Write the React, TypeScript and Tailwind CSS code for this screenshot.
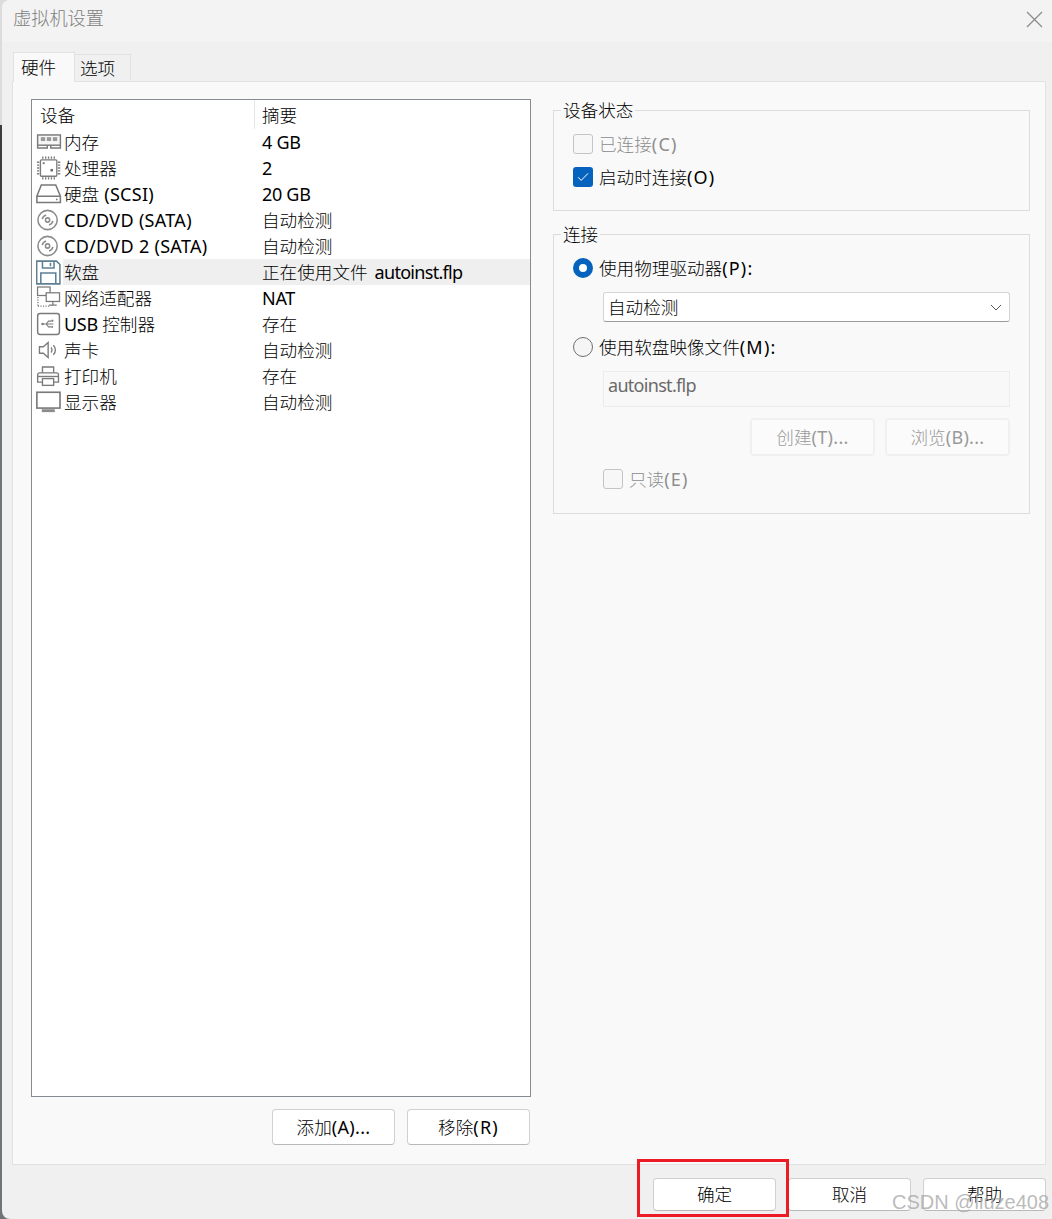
import { FC, ReactNode } from "react";

const FONT = "font-['Noto_Sans','Noto_Sans_CJK_SC',sans-serif]";

//Latin runs need small spacing fixes to sit at the reference's widths
const latinClass = (part: string) => {
  if (/[a-z]{2}/.test(part)) return "tracking-[-0.7px] [word-spacing:3px]";
  if (/^\(.\):?$/.test(part)) return "tracking-[1.2px]";
  if (/^[\dA-Z ]+$/.test(part)) return "tracking-[-0.3px]";
  return "tracking-[0.3px]";
};

//Chinese runs render thin and grey in the reference, latin runs black
const Txt: FC<{ children: string }> = ({ children }) => (
  <>
    {children.split(/([\u4e00-\u9fff]+)/).map((part, i) =>
      i % 2 === 1 ? (
        <span key={i} className="text-[17.6px] font-light">
          {part}
        </span>
      ) : (
        <span key={i} className={latinClass(part)}>
          {part}
        </span>
      ),
    )}
  </>
);

//Hardware icons, all drawn on a 28x26 box
const MemoryIcon = () => (
  <svg width="28" height="26" viewBox="0 0 28 26" fill="none" stroke="#7a7a7a" strokeWidth="1.5">
    <rect x="1.7" y="5.7" width="23.6" height="10.6" fill="#f6f6f6" />
    <rect x="5" y="8" width="4.5" height="4" fill="#999" stroke="none" />
    <rect x="11.2" y="8" width="4.5" height="4" fill="#999" stroke="none" />
    <rect x="17.5" y="8" width="4.5" height="4" fill="#999" stroke="none" />
    <path d="M1.7 16.3v3h10v-3M25.3 16.3v3h-10v-3" />
  </svg>
);

const CpuIcon = () => (
  <svg width="28" height="26" viewBox="0 0 28 26" fill="none" stroke="#7a7a7a" strokeWidth="1.4">
    <rect x="4.6" y="4.6" width="17" height="17" rx="1" />
    <path d="M7 1v2.4M10 1v2.4M13 1v2.4M16 1v2.4M19 1v2.4M7 22.6V25M10 22.6V25M13 22.6V25M16 22.6V25M19 22.6V25M1 7h2.4M1 10h2.4M1 13h2.4M1 16h2.4M1 19h2.4M22.8 7h2.4M22.8 10h2.4M22.8 13h2.4M22.8 16h2.4M22.8 19h2.4" />
    <rect x="7" y="7" width="2" height="2" fill="#7a7a7a" stroke="none" />
    <rect x="15" y="14" width="2.6" height="2.6" fill="#6a6a6a" stroke="none" />
  </svg>
);

const DiskIcon = () => (
  <svg width="28" height="26" viewBox="0 0 28 26" fill="none" stroke="#7a7a7a" strokeWidth="1.6">
    <path d="M5.5 3.7h15l4.8 11.6v6.5H.9v-6.5z" />
    <path d="M.9 15.3h24.4" />
    <circle cx="21.5" cy="18.6" r="0.9" fill="#7a7a7a" stroke="none" />
  </svg>
);

const CdIcon = () => (
  <svg width="28" height="26" viewBox="0 0 28 26" fill="none" stroke="#8c8c8c" strokeWidth="1.6">
    <circle cx="12" cy="13" r="10" />
    <circle cx="12" cy="13" r="2.2" />
    <path d="M6.5 12a5.6 5.6 0 0 1 4-4.3M17.5 14a5.6 5.6 0 0 1-4 4.3" />
  </svg>
);

const FloppyIcon = () => (
  <svg width="28" height="26" viewBox="0 0 28 26" fill="none" stroke="#5f8094" strokeWidth="1.6">
    <path d="M.7 1.7h20.5l3.6 3.6v20H.7z" />
    <path d="M6.7 1.7v7.2h12V1.7M15 3.5v3.5M5 25.3V14h15.5v11.3" />
  </svg>
);

const NetworkIcon = () => (
  <svg width="28" height="26" viewBox="0 0 28 26" fill="none" stroke="#7a7a7a" strokeWidth="1.3">
    <rect x="1.6" y="1.6" width="13" height="8.8" />
    <rect x="10.6" y="7.6" width="13.8" height="9" fill="#fff" />
    <path d="M17.5 16.6v3.4M13.5 20.4h8" />
    <path d="M2 12v9.5M2 21.5h12" strokeDasharray="1.2 1.4" />
  </svg>
);

const UsbIcon = () => (
  <svg width="28" height="26" viewBox="0 0 28 26" fill="none" stroke="#7a7a7a" strokeWidth="1.5">
    <rect x="1.7" y="2.2" width="22.6" height="21.6" rx="2.5" />
    <path d="M7 13h11M10.5 13l2.5-3h3M10.5 13l2.5 3h3" strokeWidth="1.1" />
    <rect x="16" y="8.6" width="2" height="2" fill="#7a7a7a" stroke="none" />
    <circle cx="16.8" cy="16" r="1" fill="#7a7a7a" stroke="none" />
    <circle cx="6.8" cy="13" r="1.3" fill="#7a7a7a" stroke="none" />
  </svg>
);

const SoundIcon = () => (
  <svg width="28" height="26" viewBox="0 0 28 26" fill="none" stroke="#7a7a7a" strokeWidth="1.4">
    <path d="M3.6 9.6h4l5-4.4v15.6l-5-4.4h-4z" />
    <path d="M15.5 10.5a3.5 3.5 0 0 1 0 5M18 8a7 7 0 0 1 0 10" />
  </svg>
);

const PrinterIcon = () => (
  <svg width="28" height="26" viewBox="0 0 28 26" fill="none" stroke="#7a7a7a" strokeWidth="1.4">
    <path d="M6.7 9.7V3.7h11.6v6" />
    <path d="M6.7 19.3H1.7V11.7a2 2 0 0 1 2-2h17.6a2 2 0 0 1 2 2v7.6h-5" />
    <rect x="6.7" y="15.7" width="11.6" height="7" />
    <path d="M1.7 13.5h21.6" />
  </svg>
);

const DisplayIcon = () => (
  <svg width="28" height="26" viewBox="0 0 28 26" fill="none">
    <rect x="0.9" y="2.9" width="24" height="16.4" stroke="#7a7a7a" strokeWidth="1.7" />
    <rect x="6" y="20.5" width="13.5" height="3" fill="#8c8c8c" />
  </svg>
);

const devices = [
  { icon: <MemoryIcon />, name: "内存", summary: "4 GB" },
  { icon: <CpuIcon />, name: "处理器", summary: "2" },
  { icon: <DiskIcon />, name: "硬盘 (SCSI)", summary: "20 GB" },
  { icon: <CdIcon />, name: "CD/DVD (SATA)", summary: "自动检测" },
  { icon: <CdIcon />, name: "CD/DVD 2 (SATA)", summary: "自动检测" },
  { icon: <FloppyIcon />, name: "软盘", summary: "正在使用文件 autoinst.flp", selected: true },
  { icon: <NetworkIcon />, name: "网络适配器", summary: "NAT" },
  { icon: <UsbIcon />, name: "USB 控制器", summary: "存在" },
  { icon: <SoundIcon />, name: "声卡", summary: "自动检测" },
  { icon: <PrinterIcon />, name: "打印机", summary: "存在" },
  { icon: <DisplayIcon />, name: "显示器", summary: "自动检测" },
];

const Group: FC<{ title: string; className: string; children: ReactNode }> = ({ title, className, children }) => (
  <div className={`relative border border-[#dcdcdc] pl-[19px] pr-[19px] pt-[23px] ${className}`}>
    <span className="absolute left-[7px] top-[-13px] bg-[#f9f9f9] px-[2px] leading-[24px]">
      <Txt>{title}</Txt>
    </span>
    {children}
  </div>
);

const Check: FC<{ label: string; checked?: boolean; disabled?: boolean; className?: string }> = ({
  label,
  checked,
  disabled,
  className,
}) => (
  <div className={`flex h-[20px] items-center gap-[6px] ${disabled ? "text-[#8d8d8d]" : "text-black"} ${className ?? ""}`}>
    {checked ? (
      <span className="flex size-[20px] items-center justify-center rounded-[3px] bg-[#0563bd]">
        <svg width="12" height="10" viewBox="0 0 12 10" fill="none" stroke="#fff" strokeWidth="1">
          <path d="M1 5.2 4.2 8.4 11 1.4" />
        </svg>
      </span>
    ) : (
      <span className="size-[20px] rounded-[3px] border border-[#c4c4c4] bg-[#f7f7f7]" />
    )}
    <span>
      <Txt>{label}</Txt>
    </span>
  </div>
);

const Radio: FC<{ label: string; checked?: boolean; className?: string }> = ({ label, checked, className }) => (
  <div className={`flex h-[20px] items-center gap-[6px] ${className ?? ""}`}>
    {checked ? (
      <span className="size-[20px] rounded-full border-[6px] border-[#0563bd] bg-white" />
    ) : (
      <span className="size-[20px] rounded-full border border-[#6f6f6f] bg-[#f5f5f5]" />
    )}
    <span>
      <Txt>{label}</Txt>
    </span>
  </div>
);

const Button: FC<{ label: string; className?: string }> = ({ label, className }) => (
  <button className={`rounded-[4px] border border-[#d0d0d0] border-b-[#b9b9b9] bg-white ${className ?? ""}`}>
    <Txt>{label}</Txt>
  </button>
);

const DisabledButton: FC<{ label: string }> = ({ label }) => (
  <button className="h-[38px] w-[125px] rounded-[4px] border-[2px] border-[#f0f0f0] bg-[#fbfbfb] text-[#9a9a9a]">
    <Txt>{label}</Txt>
  </button>
);

const App: FC = () => {
  return (
    <div
      className={`relative flex h-[1219px] w-[1052px] overflow-hidden bg-[linear-gradient(#dcdcdc_0,#dcdcdc_125px,#3c3c3c_125px,#3c3c3c_240px,#6f7478_240px)] text-[18px] text-black ${FONT}`}
    >
      <div className="ml-[2px] flex flex-1 flex-col overflow-hidden rounded-l-[8px] bg-[#f0f0f0]">
        {/* Title bar */}
        <div className="flex h-[42px] items-center justify-between bg-[#f3f3f3] pb-[4px] pl-[11px] pr-[9px] text-[18.2px] font-light text-[#808080]">
          <span>虚拟机设置</span>
          <svg width="17" height="17" viewBox="0 0 17 17" fill="none" stroke="#8c8c8c" strokeWidth="1.3">
            <path d="M1 1l15 15M16 1 1 16" />
          </svg>
        </div>

        {/* Tabs */}
        <div className="flex items-end pl-[11px] pt-[10px]">
          <div className="z-10 mb-[-1px] flex h-[30px] w-[62px] items-center border border-b-0 border-[#e2e2e2] bg-[#f9f9f9] pl-[7px]">
            <Txt>硬件</Txt>
          </div>
          <div className="flex h-[27px] w-[56px] items-center border border-b-0 border-l-0 border-[#e2e2e2] bg-[#f0f0f0] pl-[5px]">
            <Txt>选项</Txt>
          </div>
        </div>

        {/* Panel */}
        <div className="ml-[10px] mr-[6px] flex h-[1084px] border border-[#e2e2e2] bg-[#f9f9f9] pl-[18px] pt-[17px]">
          <div className="w-[500px]">
            <div className="h-[998px] border border-[#878c92] bg-white">
              <div className="flex h-[29px] items-center">
                <span className="w-[222px] pl-[8px] pt-[1px]">
                  <Txt>设备</Txt>
                </span>
                <span className="h-full border-l border-[#e5e5e5] pl-[7px] leading-[31px]">
                  <Txt>摘要</Txt>
                </span>
              </div>
              {devices.map((d) => (
                <div key={d.name} className="flex h-[26px] items-center">
                  <span className="ml-[4px] flex h-[26px] w-[27px] shrink-0 items-center overflow-hidden">{d.icon}</span>
                  <span className={`flex h-full w-[192px] items-center whitespace-pre ${d.selected ? "bg-[#efefef]" : ""}`}>
                    <span className="pl-[1px]">
                      <Txt>{d.name}</Txt>
                    </span>
                  </span>
                  <span className={`flex h-full flex-1 items-center whitespace-pre pl-[7px] ${d.selected ? "bg-[#efefef]" : ""}`}>
                    <span>
                      <Txt>{d.summary}</Txt>
                    </span>
                  </span>
                </div>
              ))}
            </div>
            <div className="mt-[12px] flex justify-end gap-[12px] pr-[1px]">
              <Button label="添加(A)..." className="h-[36px] w-[123px]" />
              <Button label="移除(R)" className="h-[36px] w-[123px]" />
            </div>
          </div>

          <div className="ml-[22px] flex w-[477px] flex-col pt-[11px]">
            <Group title="设备状态" className="h-[101px]">
              <Check label="已连接(C)" disabled />
              <Check label="启动时连接(O)" checked className="mt-[13px]" />
            </Group>
            <Group title="连接" className="mt-[23px] h-[280px]">
              <Radio label="使用物理驱动器(P):" checked />
              <div className="ml-[30px] mt-[14px] flex h-[30px] items-center justify-between rounded-[3px] border border-[#d5d5d5] border-b-[#9c9c9c] bg-white pl-[4px] pr-[7px]">
                <span>
                  <Txt>自动检测</Txt>
                </span>
                <svg width="12" height="7" viewBox="0 0 12 7" fill="none" stroke="#555" strokeWidth="1">
                  <path d="M1 1l5 5 5-5" />
                </svg>
              </div>
              <Radio label="使用软盘映像文件(M):" className="mt-[15px]" />
              <div className="ml-[30px] mt-[14px] h-[36px] border border-[#ececec] bg-[#f8f8f8] pl-[4px] leading-[27px] text-[#6a6a6a]">
                <Txt>autoinst.flp</Txt>
              </div>
              <div className="mt-[11px] flex justify-end gap-[10px]">
                <DisabledButton label="创建(T)..." />
                <DisabledButton label="浏览(B)..." />
              </div>
              <Check label="只读(E)" disabled className="ml-[30px] mt-[13px]" />
            </Group>
          </div>
        </div>

        {/* Footer */}
        <div className="mr-[6px] mt-[13px] flex justify-end gap-[12px]">
          <Button label="确定" className="h-[33px] w-[123px]" />
          <Button label="取消" className="h-[33px] w-[123px]" />
          <Button label="帮助" className="h-[33px] w-[123px]" />
        </div>
      </div>

      {/* Red highlight and watermark lying over the footer */}
      <div className="absolute left-[637px] top-[1159px] h-[58px] w-[152px] border-[3px] border-[#ed1c24]" />
      <span className="absolute left-[892px] top-[1189px] whitespace-nowrap font-['Liberation_Sans',sans-serif] text-[20px] leading-[26px] text-[#a9a9a9]/80">
        CSDN @liuze408
      </span>
    </div>
  );
};

export default App;
